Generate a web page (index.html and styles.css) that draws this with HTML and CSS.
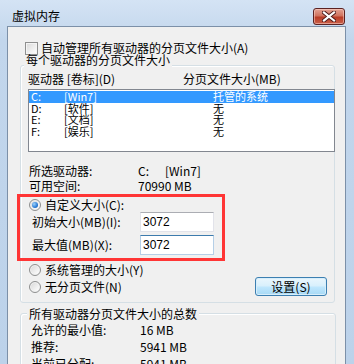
FILE: index.html
```html
<!DOCTYPE html>
<html lang="zh-CN">
<head>
    <meta charset="UTF-8">
    <title>虚拟内存</title>
    <link rel="stylesheet" href="styles.css">
</head>
<body>
    <div class="window">
        <div class="titlebar">
            <span class="title">虚拟内存</span>
            <button class="close-button">
                <svg width="14" height="11" viewBox="0 0 14 11">
                    <path d="M2 1.5 L12 9.5 M12 1.5 L2 9.5" stroke="#4a1a1a" stroke-width="4" stroke-linecap="square"/>
                    <path d="M2 1.5 L12 9.5 M12 1.5 L2 9.5" stroke="#fff" stroke-width="2.2" stroke-linecap="square"/>
                </svg>
            </button>
        </div>

        <div class="content">
            <label class="check-row">
                <span class="checkbox"></span>自动管理所有驱动器的分页文件大小(A)
            </label>

            <div class="group">
                <div class="group-title">每个驱动器的分页文件大小</div>
                <div class="list-head">
                    <span class="head-drive">驱动器 [卷标](D)</span>
                    <span>分页文件大小(MB)</span>
                </div>
                <ul class="drive-list">
                    <li class="selected"><span class="col-letter">C:</span><span class="col-label">[Win7]</span><span>托管的系统</span></li>
                    <li><span class="col-letter">D:</span><span class="col-label">[软件]</span><span>无</span></li>
                    <li><span class="col-letter">E:</span><span class="col-label">[文档]</span><span>无</span></li>
                    <li><span class="col-letter">F:</span><span class="col-label">[娱乐]</span><span>无</span></li>
                </ul>

                <div class="info">
                    <div class="info-row"><span class="info-label">所选驱动器:</span><span class="info-letter">C:</span><span>[Win7]</span></div>
                    <div class="info-row"><span class="info-label">可用空间:</span><span>70990 MB</span></div>
                </div>

                <div class="highlight">
                    <label class="radio-row"><span class="radio checked"></span>自定义大小(C):</label>
                    <div class="field">
                        <span class="field-label">初始大小(MB)(I):</span>
                        <input class="text-input" type="text" value="3072">
                    </div>
                    <div class="field">
                        <span class="field-label">最大值(MB)(X):</span>
                        <input class="text-input focused" type="text" value="3072">
                    </div>
                </div>

                <label class="radio-row system-row"><span class="radio"></span>系统管理的大小(Y)</label>
                <div class="button-row">
                    <label class="radio-row"><span class="radio"></span>无分页文件(N)</label>
                    <button class="set-button">设置(S)</button>
                </div>
            </div>

            <div class="group group-total">
                <div class="group-title">所有驱动器分页文件大小的总数</div>
                <div class="total-row"><span class="total-label">允许的最小值:</span><span>16 MB</span></div>
                <div class="total-row"><span class="total-label">推荐:</span><span>5941 MB</span></div>
                <div class="total-row"><span class="total-label">当前已分配:</span><span>5941 MB</span></div>
            </div>
        </div>
    </div>
</body>
</html>
```

FILE: styles.css
```css
* {
    box-sizing: border-box;
}

body {
    margin: 0;
    font-family: "Noto Sans CJK SC", "Liberation Sans", sans-serif;
    font-size: 12px;
    line-height: 14px;
    color: #000;
}

.window {
    width: 354px;
    height: 364px;
    overflow: hidden;
    background: linear-gradient(to bottom, #d4e3f4 0, #c2d6ec 40px, #bcd2ea 100%);
}

.titlebar {
    height: 26px;
    padding: 6px 9px 0 12px;
    display: flex;
    align-items: center;
}

.title {
    font-size: 12px;
    line-height: 14px;
}

.close-button {
    margin-left: auto;
    width: 32px;
    height: 17px;
    padding: 0;
    border: 1px solid #5b2222;
    border-radius: 3px;
    background: linear-gradient(to bottom, #e4a293 0, #d0735f 45%, #b93c26 55%, #c9604a 100%);
    box-shadow: inset 0 0 0 1px rgba(255, 220, 210, 0.5);
    display: flex;
    align-items: center;
    justify-content: center;
}

.content {
    height: 338px;
    margin: 0 8px 0 7px;
    border: 1px solid #7c90a8;
    border-bottom: none;
    background-color: #f0f0f0;
    padding: 14px 10px 0 12px;
}

.check-row {
    display: flex;
    align-items: center;
    height: 14px;
    line-height: 14px;
    padding-left: 5px;
}

.checkbox {
    width: 13px;
    height: 13px;
    margin-right: 3px;
    border: 1px solid #8e8f8f;
    background: linear-gradient(135deg, #d8d8d8 0, #f4f4f4 70%, #fff 100%);
    box-shadow: inset 0 0 0 1px #f4f4f4;
}

.group {
    margin-top: 10px;
    border: 1px solid #d5dfe5;
    border-radius: 3px;
    box-shadow: inset 1px 1px 0 #fff;
    padding-bottom: 6px;
}

.group-title {
    width: fit-content;
    margin: -13px 0 0 3px;
    padding: 0 2px;
    line-height: 14px;
    background-color: #f0f0f0;
}

.list-head {
    display: flex;
    margin-top: 5px;
    padding-left: 7px;
    line-height: 14px;
}

.head-drive {
    width: 155px;
}

.drive-list {
    list-style: none;
    margin: 3px 0 0 7px;
    padding: 1px 0 0 0;
    width: 307px;
    height: 63px;
    border: 1px solid #828790;
    background-color: #fff;
    font-size: 11px;
}

.drive-list li {
    display: flex;
    height: 11.5px;
    line-height: 11.5px;
    padding-left: 2px;
}

.drive-list li.selected {
    background-color: #3399ff;
    color: #fff;
}

.col-letter {
    width: 33px;
}

.col-label {
    width: 149px;
}

.info {
    margin-top: 11px;
    padding-left: 8px;
}

.info-row {
    display: flex;
    line-height: 15px;
}

.info-label {
    width: 109px;
}

.info-letter {
    width: 27px;
}

.highlight {
    width: 208px;
    margin: 1px 0 0 -4px;
    border: 3px solid #ff3535;
    padding-bottom: 3px;
}

.radio-row {
    display: flex;
    align-items: center;
    height: 14px;
    line-height: 14px;
}

.highlight .radio-row {
    margin-top: 1px;
    padding-left: 9px;
}

.radio {
    width: 12px;
    height: 12px;
    margin-right: 4px;
    border: 1px solid #8e8f8f;
    border-radius: 50%;
    background: linear-gradient(135deg, #d6d6d6 0, #f7f7f7 75%);
    box-shadow: inset 0 0 0 1px #f2f2f2;
    display: flex;
    align-items: center;
    justify-content: center;
}

.radio.checked::before {
    content: '';
    width: 6px;
    height: 6px;
    border-radius: 50%;
    background: radial-gradient(circle at 35% 35%, #9ed3fb 0, #2a7bd6 60%, #14509e 100%);
}

.field {
    display: flex;
    align-items: center;
    height: 20px;
    padding-left: 12px;
}

.field + .field {
    margin-top: 3px;
}

.field-label {
    width: 108px;
}

.text-input {
    width: 74px;
    height: 20px;
    padding: 0 2px;
    margin: 0;
    font-family: "Liberation Sans", sans-serif;
    font-size: 12px;
    color: #000;
    background-color: #fff;
    border: 1px solid #e2e3ea;
    border-top-color: #abadb3;
    outline: none;
}

.text-input.focused {
    border-color: #b5cfe7;
    border-top-color: #3d7bad;
}

.system-row {
    margin-top: 2px;
    padding-left: 8px;
}

.button-row {
    display: flex;
    align-items: center;
    justify-content: space-between;
    height: 19px;
    padding-left: 8px;
    padding-right: 7px;
}

.set-button {
    width: 72px;
    height: 19px;
    padding: 0;
    font-family: "Noto Sans CJK SC", sans-serif;
    font-size: 12px;
    line-height: 15px;
    color: #000;
    border: 1px solid #3c7fb1;
    border-radius: 3px;
    background: linear-gradient(to bottom, #eaf6fd 0, #d9f0fc 45%, #bee6fd 55%, #a7d9f5 100%);
    box-shadow: inset 0 0 0 1px #d7eefb;
}

.group-total {
    margin-right: -1px;
}

.group-total .group-title {
    margin: -7px 0 0 6px;
}

.total-row {
    display: flex;
    line-height: 17px;
    padding-left: 10px;
}

.total-row:first-of-type {
    margin-top: 4px;
}

.total-label {
    width: 109px;
}
```
